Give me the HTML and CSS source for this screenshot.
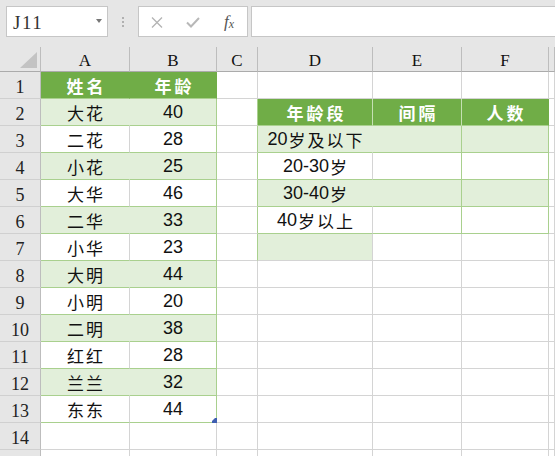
FILE: index.html
```html
<!DOCTYPE html>
<html>
<head>
<meta charset="utf-8">
<link rel="stylesheet" href="styles.css">
</head>
<body>
<div class="toolbar">
  <div class="namebox"><span class="ref">J11</span><span class="drop"></span></div>
  <div class="sep"><i></i><i></i><i></i></div>
  <div class="fbox">
    <span class="fbtn"><svg width="12" height="11" viewBox="0 0 12 11"><path d="M1 0.5L11 10.5M11 0.5L1 10.5" stroke="#b3b3b3" stroke-width="1.3" fill="none"/></svg></span>
    <span class="fbtn"><svg width="14" height="11" viewBox="0 0 14 11"><path d="M1 5.5L5 9.5L13 1" stroke="#b8b8b8" stroke-width="2" fill="none"/></svg></span>
    <span class="fbtn fx">f<span class="fxs">x</span></span>
  </div>
  <div class="finput"></div>
</div>
<div class="sheet">
  <!-- header -->
  <div class="corner"><span class="tri"></span></div>
  <div class="ch">A</div><div class="ch">B</div><div class="ch">C</div><div class="ch">D</div><div class="ch">E</div><div class="ch">F</div><div class="ch"></div>

  <!-- row 1 -->
  <div class="rn">1</div>
  <div class="c th in">姓名</div><div class="c th out">年龄</div>
  <div class="c"></div><div class="c"></div><div class="c"></div><div class="c"></div><div class="c"></div>

  <!-- row 2 -->
  <div class="rn">2</div>
  <div class="c band in">大花</div><div class="c band out num">40</div>
  <div class="c gl"></div>
  <div class="c th2">年龄段</div><div class="c th2">间隔</div><div class="c th out">人数</div><div class="c"></div>

  <!-- row 3 -->
  <div class="rn">3</div>
  <div class="c plain">二花</div><div class="c plain out num">28</div>
  <div class="c gl"></div>
  <div class="c band in"><span class="d">20</span>岁及以下</div><div class="c band out"></div><div class="c band out"></div><div class="c"></div>

  <!-- row 4 -->
  <div class="rn">4</div>
  <div class="c band in">小花</div><div class="c band out num">25</div>
  <div class="c gl"></div>
  <div class="c plain"><span class="d">20-30</span>岁</div><div class="c plain out"></div><div class="c plain out"></div><div class="c"></div>

  <!-- row 5 -->
  <div class="rn">5</div>
  <div class="c plain">大华</div><div class="c plain out num">46</div>
  <div class="c gl"></div>
  <div class="c band in"><span class="d">30-40</span>岁</div><div class="c band out"></div><div class="c band out"></div><div class="c"></div>

  <!-- row 6 -->
  <div class="rn">6</div>
  <div class="c band in">二华</div><div class="c band out num">33</div>
  <div class="c gl"></div>
  <div class="c plain"><span class="d">40</span>岁以上</div><div class="c plain out"></div><div class="c plain out"></div><div class="c"></div>

  <!-- row 7 -->
  <div class="rn">7</div>
  <div class="c plain">小华</div><div class="c plain out num">23</div>
  <div class="c gl"></div>
  <div class="c fill"></div><div class="c"></div><div class="c"></div><div class="c"></div>

  <!-- row 8 -->
  <div class="rn">8</div>
  <div class="c band in">大明</div><div class="c band out num">44</div>
  <div class="c"></div><div class="c"></div><div class="c"></div><div class="c"></div><div class="c"></div>

  <!-- row 9 -->
  <div class="rn">9</div>
  <div class="c plain">小明</div><div class="c plain out num">20</div>
  <div class="c"></div><div class="c"></div><div class="c"></div><div class="c"></div><div class="c"></div>

  <!-- row 10 -->
  <div class="rn">10</div>
  <div class="c band in">二明</div><div class="c band out num">38</div>
  <div class="c"></div><div class="c"></div><div class="c"></div><div class="c"></div><div class="c"></div>

  <!-- row 11 -->
  <div class="rn">11</div>
  <div class="c plain">红红</div><div class="c plain out num">28</div>
  <div class="c"></div><div class="c"></div><div class="c"></div><div class="c"></div><div class="c"></div>

  <!-- row 12 -->
  <div class="rn">12</div>
  <div class="c band in">兰兰</div><div class="c band out num">32</div>
  <div class="c"></div><div class="c"></div><div class="c"></div><div class="c"></div><div class="c"></div>

  <!-- row 13 -->
  <div class="rn">13</div>
  <div class="c plain">东东</div><div class="c plain out last num">44<span class="handle"></span></div>
  <div class="c"></div><div class="c"></div><div class="c"></div><div class="c"></div><div class="c"></div>

  <!-- row 14 -->
  <div class="rn">14</div>
  <div class="c"></div><div class="c"></div><div class="c"></div><div class="c"></div><div class="c"></div><div class="c"></div><div class="c"></div>

  <!-- row 15 -->
  <div class="rn"></div>
  <div class="c"></div><div class="c"></div><div class="c"></div><div class="c"></div><div class="c"></div><div class="c"></div><div class="c"></div>
</div>
</body>
</html>
```

FILE: styles.css
```css
* { box-sizing: border-box; }
html, body {
  margin: 0;
  padding: 0;
  width: 555px;
  height: 456px;
  overflow: hidden;
  background: #ffffff;
}
body {
  font-family: "Liberation Sans", "Noto Sans CJK SC", sans-serif;
}

/* toolbar */
.toolbar {
  height: 47px;
  background: #e6e6e6;
  display: flex;
  align-items: flex-start;
  padding: 6px 0 0 6px;
}
.namebox {
  width: 102px;
  height: 31px;
  background: #fff;
  border: 1px solid #c6c6c6;
  display: flex;
  align-items: center;
  padding: 2px 5px 0 6px;
}
.ref {
  font-family: "Liberation Serif", serif;
  font-size: 19px;
  color: #333;
  letter-spacing: 1.5px;
}
.drop {
  margin-left: auto;
  width: 0;
  height: 0;
  border-left: 3.5px solid transparent;
  border-right: 3.5px solid transparent;
  border-top: 4px solid #777;
  margin-top: -3px;
}
.sep {
  width: 30px;
  height: 31px;
  display: flex;
  flex-direction: column;
  align-items: center;
  justify-content: center;
  gap: 2px;
}
.sep i {
  display: block;
  width: 2px;
  height: 2px;
  background: #b0b0b0;
}
.fbox {
  width: 110px;
  height: 31px;
  background: #fff;
  border: 1px solid #c6c6c6;
  display: flex;
  align-items: center;
}
.fbtn {
  width: 36px;
  height: 29px;
  display: flex;
  align-items: center;
  justify-content: center;
}
.fbtn svg { display: block; margin-top: 2px; }
.fx {
  font-family: "Liberation Serif", serif;
  font-style: italic;
  font-size: 17px;
  color: #555;
  align-items: center;
  padding-top: 1px;
}
.fxs {
  font-size: 12px;
  margin-top: 4px;
  margin-left: 0px;
}
.finput {
  margin-left: 3px;
  flex: 1;
  height: 31px;
  background: #fff;
  border: 1px solid #c6c6c6;
  border-right: none;
}

/* sheet */
.sheet {
  display: grid;
  grid-template-columns: 41px 89px 87px 41px 115px 89px 87px 1fr;
  grid-template-rows: 25px;
  grid-auto-rows: 27px;
}
.corner {
  background: #e6e6e6;
  border-right: 1px solid #bdbdbd;
  border-bottom: 1px solid #ababab;
  position: relative;
}
.tri {
  position: absolute;
  left: 20px;
  top: 5px;
  width: 17px;
  height: 16px;
  background: #c3c3c3;
  clip-path: polygon(100% 0, 100% 100%, 0 100%);
}
.ch {
  background: #e6e6e6;
  border-right: 1px solid #bdbdbd;
  border-bottom: 1px solid #ababab;
  font-family: "Liberation Serif", serif;
  font-size: 17px;
  color: #111;
  display: flex;
  align-items: center;
  justify-content: center;
  padding-top: 3px;
}
.rn {
  background: #e6e6e6;
  border-right: 1px solid #bdbdbd;
  border-bottom: 1px solid #d0d0d0;
  font-family: "Liberation Serif", serif;
  font-size: 18px;
  color: #222;
  display: flex;
  align-items: center;
  justify-content: center;
  padding-top: 5px;
}
.c {
  border-right: 1px solid #d4d4d4;
  border-bottom: 1px solid #d4d4d4;
  display: flex;
  align-items: center;
  justify-content: center;
  font-size: 17px;
  color: #111;
  letter-spacing: 2px;
  white-space: nowrap;
  padding-top: 1px;
  padding-left: 2px;
}
.d {
  font-size: 18px;
  letter-spacing: 0;
  margin-right: 1px;
}
.num {
  font-size: 18px;
  letter-spacing: 0;
  padding-left: 0;
}
.th, .th2 {
  background: #70ad47;
  color: #fff;
  font-weight: 700;
  letter-spacing: 3px;
  padding-left: 3px;
  border-bottom-color: #a9d08e;
  border-right-color: #70ad47;
}
.th2 { border-right-color: #c5e0b3; }
.th.out { border-right-color: #70ad47; }
.band {
  background: #e2efda;
  border-bottom-color: #a9d08e;
}
.band.in { border-right-color: #e2efda; }
.plain { border-bottom-color: #a9d08e; }
.out { border-right-color: #a9d08e; }
.gl { border-right-color: #a9d08e; }
.fill { background: #e2efda; }
.last { position: relative; }
.handle {
  position: absolute;
  right: -1px;
  bottom: -1px;
  width: 5px;
  height: 5px;
  background: #3f5fb0;
  clip-path: polygon(60% 0, 100% 0, 100% 100%, 0 100%, 0 60%);
}
```
